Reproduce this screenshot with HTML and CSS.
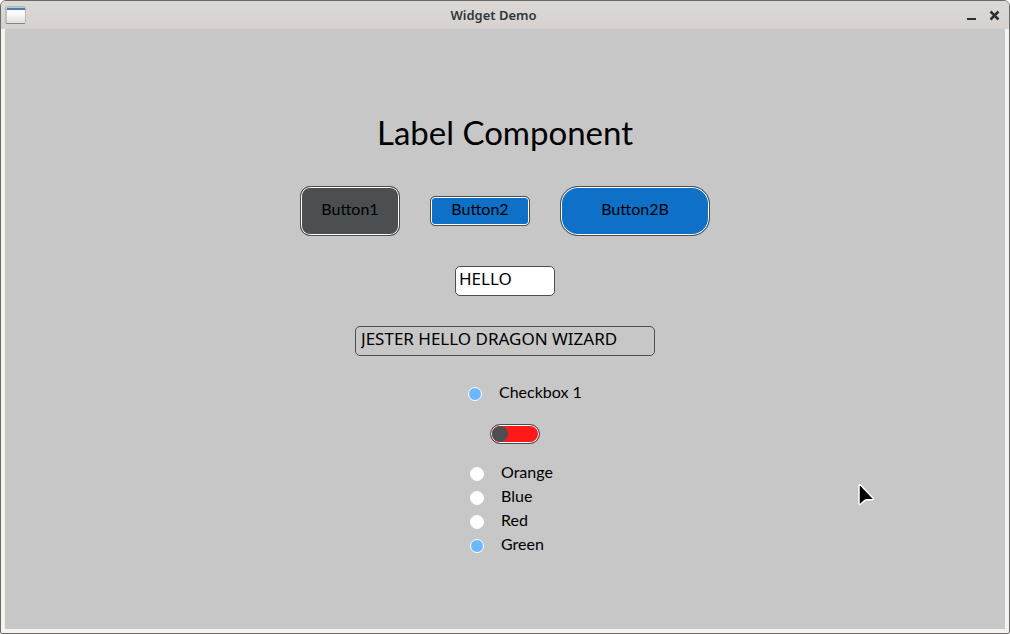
FILE: index.html
```html
<!DOCTYPE html>
<html lang="en">
<head>
<meta charset="utf-8">
<title>Widget Demo</title>
<link rel="stylesheet" href="styles.css">
</head>
<body>
<div class="window">
  <header class="titlebar">
    <svg class="app-icon" width="22" height="18" viewBox="0 0 22 18" aria-hidden="true">
      <defs><linearGradient id="pane" x1="0" y1="0" x2="0" y2="1"><stop offset="0" stop-color="#fff"/><stop offset=".4" stop-color="#fafafa"/><stop offset="1" stop-color="#dcdfda"/></linearGradient></defs>
      <rect x=".5" y=".5" width="20" height="17" rx="1.5" fill="#c2c6c2" stroke="#b5bab5"/>
      <rect x="2" y="2" width="18" height="15" fill="url(#pane)"/>
      <rect x="2" y="2" width="18" height="2" fill="#4a78b8"/>
      <rect x="1" y="17" width="19" height="1" fill="#858985"/>
    </svg>
    <h1 class="title">Widget Demo</h1>
    <div class="controls">
      <button class="control" aria-label="Minimize"><svg width="11" height="11" viewBox="0 0 11 11"><path d="M1 9h9" stroke="#2b3034" stroke-width="2"/></svg></button>
      <button class="control" aria-label="Close"><svg width="11" height="11" viewBox="0 0 11 11"><path d="M1.5 1.5l8 8M9.500 1.500l-8 8" stroke="#2b3034" stroke-width="2.500"/></svg></button>
    </div>
  </header>
  <main class="panel">
    <h2 class="heading">Label Component</h2>
    <div class="buttons">
      <button class="button button-dark">Button1</button>
      <button class="button button-small">Button2</button>
      <button class="button button-wide">Button2B</button>
    </div>
    <input class="field" type="text" value="HELLO" aria-label="Short text">
    <input class="field field-long" type="text" value="JESTER HELLO DRAGON WIZARD" aria-label="Long text">
    <div class="choices">
      <label class="option"><input class="dot" type="checkbox" checked>Checkbox 1</label>
      <input class="switch" type="checkbox" role="switch" aria-label="Toggle">
      <div class="radios" role="radiogroup" aria-label="Colour">
        <label class="option"><input class="dot" type="radio" name="colour">Orange</label>
        <label class="option"><input class="dot" type="radio" name="colour">Blue</label>
        <label class="option"><input class="dot" type="radio" name="colour">Red</label>
        <label class="option"><input class="dot" type="radio" name="colour" checked>Green</label>
      </div>
    </div>
  </main>
  <svg class="pointer" width="20" height="24" viewBox="0 0 20 24" aria-hidden="true"><path d="M2 3v17.500q.3 1.600 1.500.7l3-2.700q1.500-1.500 3.500-1.700h5q2.400-.2.900-1.900L4 2.500Q2.200 1.200 2 3z" fill="#000" stroke="#fff" stroke-width="1.500"/></svg>
</div>
</body>
</html>
```
FILE: styles.css
```css
* {
  box-sizing: border-box;
}

body {
  margin: 0;
  background: #fff;
  color: #000;
  font-family: Lato, "Noto Sans", sans-serif;
  font-size: 16px;
}

.window {
  position: relative;
  display: flex;
  flex-direction: column;
  min-height: 100vh;
  border: 1px solid #6d6967;
  border-radius: 6px 6px 2px 2px;
  background: #f4f3f2;
  overflow: hidden;
}

.titlebar {
  display: grid;
  grid-template-columns: 1fr auto 1fr;
  align-items: center;
  height: 28px;
  padding: 0 9px 0 4px;
  background: linear-gradient(#dcd8d5, #d7d2cf);
}

.title {
  margin: 0;
  padding-right: 18px;
  color: #2f363b;
  font-family: "Noto Sans", sans-serif;
  font-size: 13px;
  font-weight: 600;
  line-height: 18px;
}

.controls {
  display: flex;
  justify-content: flex-end;
  gap: 12px;
}

.control {
  display: flex;
  padding: 0;
  border: 0;
  background: none;
}

.panel {
  flex: 1;
  display: flex;
  flex-direction: column;
  align-items: center;
  margin: 0 4px 4px;
  padding-top: 79px;
  background: #c7c7c7;
}

.heading {
  margin: 0;
  font-size: 33px;
  font-weight: 400;
  line-height: 48px;
}

.buttons {
  display: flex;
  align-items: center;
  gap: 30px;
  margin: 30px 0;
}

.button {
  width: 100px;
  height: 50px;
  padding: 0 0 5px;
  border: 1px solid #4b4f52;
  border-radius: 10px;
  background: #0f70c8;
  box-shadow: inset 0 0 0 1px #fff;
  color: #000;
  font: inherit;
}

.button-dark {
  background: #4b4f52;
}

.button-small {
  height: 30px;
  border-radius: 5px;
}

.button-wide {
  width: 150px;
  border-radius: 18px;
}

.field {
  width: 100px;
  height: 30px;
  margin-bottom: 30px;
  padding: 0 3px 5px;
  border: 1px solid #4b4f52;
  border-radius: 5px;
  background: #fff;
  color: #000;
  font-family: "Noto Sans", sans-serif;
  font-size: 17px;
}

.field-long {
  width: 300px;
  margin-bottom: 24px;
  padding-left: 5px;
  background: none;
}

.choices {
  width: 240px;
  padding-left: 83px;
}

.option {
  display: flex;
  align-items: center;
  gap: 17px;
  height: 24px;
  line-height: 22px;
  padding-bottom: 1px;
}

.dot {
  appearance: none;
  width: 14px;
  height: 14px;
  margin: 4px 0 0;
  border: 1px solid #fff;
  border-radius: 50%;
  background: #fff;
}

.dot:checked {
  background: #6cb8ff;
}

.switch {
  appearance: none;
  display: block;
  width: 50px;
  height: 20px;
  margin: 20px 0 16px 22px;
  border: 1px solid #4b4f52;
  border-radius: 10px;
  background: #ff1818;
  box-shadow: inset 0 0 0 1px #fff;
}

.switch::before {
  content: "";
  display: block;
  width: 16px;
  height: 16px;
  margin: 1px;
  border-radius: 50%;
  background: #4b4f52;
}

.radios {
  padding-left: 2px;
}

.pointer {
  position: absolute;
  top: 482px;
  left: 856px;
}
```
